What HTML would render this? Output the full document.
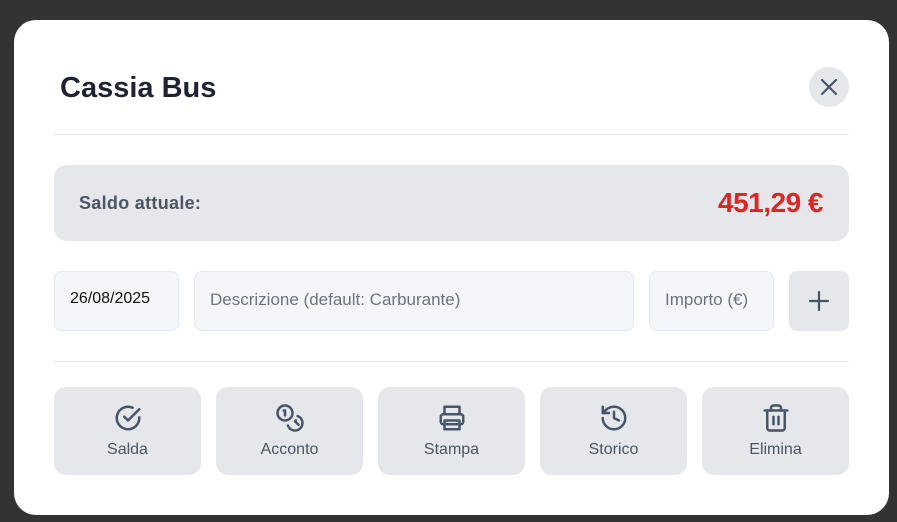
<!DOCTYPE html>
<html><head><meta charset="utf-8"><style>
*{box-sizing:border-box;margin:0;padding:0}
body{width:897px;height:522px;background:#333;overflow:hidden;position:relative;font-family:"Liberation Sans",sans-serif}
.m{position:absolute;left:14px;top:20px;width:875px;height:495px;background:#fff;border-radius:22px}
.a{position:absolute}
h1{position:absolute;left:46px;top:52px;font-size:29px;font-weight:700;color:#1f2230}
.x{left:795px;top:47px;width:40px;height:40px;border-radius:50%;background:#e5e7eb}
.hr{height:1px;background:#e2e8f0;left:40px;width:795px}
.bal{left:40px;top:145px;width:795px;height:76px;background:#e5e7eb;border-radius:13px}
.bal .l{position:absolute;left:25px;top:28px;font-size:18px;font-weight:700;color:#4b5563;letter-spacing:0.3px}
.bal .r{position:absolute;right:26px;top:22px;font-size:28px;font-weight:700;color:#dc2626;letter-spacing:-0.5px}
.in{top:251px;height:60px;border:1px solid #e2e8f0;background:#f4f6fa;border-radius:8px;font-size:17px;color:#6b7280;padding:18px 15px}
.b{top:367px;width:147px;height:88px;background:#e5e7eb;border-radius:12px;text-align:center;color:#4b5563;font-size:16px}
.b svg{position:absolute;left:59px;top:16px}
.b span{position:absolute;left:0;right:0;top:54px}
</style></head><body>
<div class="m">
<h1>Cassia Bus</h1>
<div class="a x"><svg width="40" height="40"><path d="M13 13L27 27M27 13L13 27" stroke="#475569" stroke-width="2.2" stroke-linecap="round"/></svg></div>
<div class="a hr" style="top:114px"></div>
<div class="a bal"><div class="l">Saldo attuale:</div><div class="r">451,29 €</div></div>
<div class="a in" style="left:40px;width:125px;color:#111;padding-left:15px;font-size:16px">26/08/2025</div>
<div class="a in" style="left:180px;width:440px">Descrizione (default: Carburante)</div>
<div class="a in" style="left:635px;width:125px">Importo (€)</div>
<div class="a" style="left:775px;top:251px;width:60px;height:60px;background:#e5e7eb;border-radius:8px"><svg width="60" height="60"><path d="M30 21V39M21 30H39" stroke="#475569" stroke-width="2.2" stroke-linecap="round"/></svg></div>
<div class="a hr" style="top:341px"></div>
<div class="a b" style="left:40px"><svg width="30" height="30" viewBox="0 0 24 24" fill="none" stroke="#475569" stroke-width="2" stroke-linecap="round" stroke-linejoin="round"><path d="M21 11.5V12a9 9 0 1 1-5.3-8.2"/><path d="M9 11l3 3L21 5"/></svg><span>Salda</span></div>
<div class="a b" style="left:202px"><svg width="30" height="30" viewBox="0 0 24 24" fill="none" stroke="#475569" stroke-width="2" stroke-linecap="round" stroke-linejoin="round"><circle cx="8" cy="8" r="6"/><path d="M18.1 10.4A6 6 0 1 1 10.3 18"/><path d="M7 6h1v4"/><path d="M16.7 13.9l-.7.7 2.8 2.8"/></svg><span>Acconto</span></div>
<div class="a b" style="left:364px"><svg width="30" height="30" viewBox="0 0 24 24" fill="none" stroke="#475569" stroke-width="2" stroke-linecap="round" stroke-linejoin="round"><path d="M6 9V3h12v6"/><rect x="3" y="9" width="18" height="8" rx="2"/><rect x="6" y="14" width="12" height="7"/></svg><span>Stampa</span></div>
<div class="a b" style="left:526px"><svg width="30" height="30" viewBox="0 0 24 24" fill="none" stroke="#475569" stroke-width="2" stroke-linecap="round" stroke-linejoin="round"><path d="M3 12a9 9 0 1 0 9-9 9.75 9.75 0 0 0-6.74 2.74L3 8"/><path d="M3 3v5h5"/><path d="M12 7v5l4 2"/></svg><span>Storico</span></div>
<div class="a b" style="left:688px"><svg width="30" height="30" viewBox="0 0 24 24" fill="none" stroke="#475569" stroke-width="2" stroke-linecap="round" stroke-linejoin="round"><path d="M3 6h18"/><path d="M19 6v14a2 2 0 0 1-2 2H7a2 2 0 0 1-2-2V6"/><path d="M8 6V4a2 2 0 0 1 2-2h4a2 2 0 0 1 2 2v2"/><path d="M10 11v6M14 11v6"/></svg><span>Elimina</span></div>
</div>
</body></html>
